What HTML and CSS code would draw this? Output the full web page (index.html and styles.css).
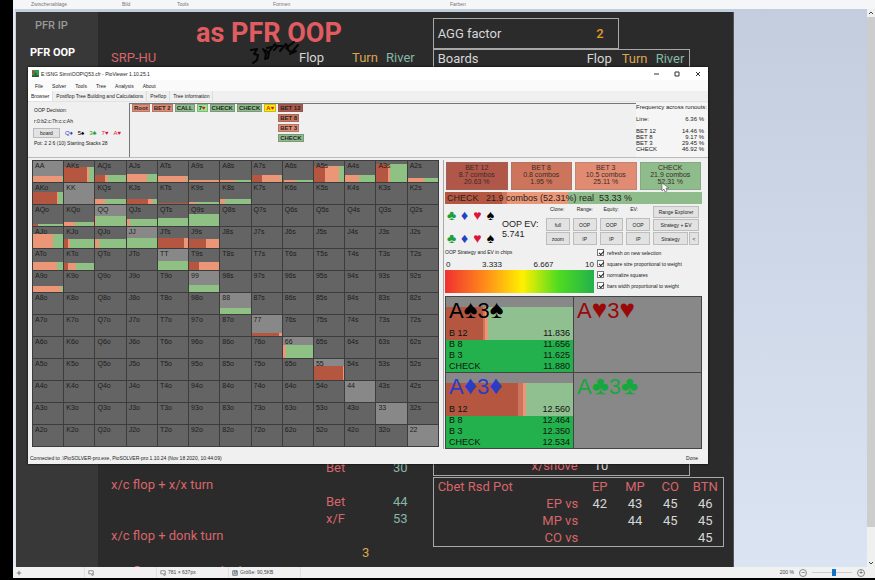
FILE: index.html
```html
<!DOCTYPE html>
<html lang="de">
<head>
    <meta charset="UTF-8">
    <meta name="viewport" content="width=device-width, initial-scale=1.0">
    <title>PioViewer</title>
    <link rel="stylesheet" href="styles.css">
</head>
<body>
    <div class="paint">
        <header class="ribbon">
            <span>Zwischenablage</span>
            <span>Bild</span>
            <span>Tools</span>
            <span>Formen</span>
            <span>Farben</span>
        </header>

        <main class="workspace">
            <div class="canvas">
                <nav class="side">
                    <a href="#ip">PFR IP</a>
                    <a href="#oop" class="current">PFR OOP</a>
                </nav>

                <section class="notes">
                    <h1>as PFR OOP</h1>
                    <div class="streets">
                        <span class="red">SRP-HU</span>
                        <span>Flop</span>
                        <span class="orange">Turn</span>
                        <span class="teal">River</span>
                    </div>
                    <div class="note-lines">
                        <div class="note"><span>Bet</span><b>30</b></div>
                        <p>x/c flop + x/x turn</p>
                        <div class="note"><span>Bet</span><b>44</b></div>
                        <div class="note"><span>x/F</span><b>53</b></div>
                        <p>x/c flop + donk turn</p>
                        <div class="note-mid">3</div>
                        <p class="last">x/c flop + x/x turn donk river</p>
                    </div>
                </section>

                <section class="stats">
                    <div class="agg"><span>AGG factor</span><b>2</b></div>
                    <div class="boards">
                        <div class="boards-head">
                            <span>Boards</span>
                            <span>Flop</span>
                            <span class="orange">Turn</span>
                            <span class="teal">River</span>
                        </div>
                        <div class="shove"><span>x/shove</span><b>10</b></div>
                    </div>
                    <table class="cbet">
                        <tr><th class="cbet-name">Cbet Rsd Pot</th><th>EP</th><th>MP</th><th>CO</th><th>BTN</th></tr>
                        <tr><th class="pos">EP vs</th><td>42</td><td>43</td><td>45</td><td>46</td></tr>
                        <tr><th class="pos">MP vs</th><td></td><td>44</td><td>45</td><td>45</td></tr>
                        <tr><th class="pos">CO vs</th><td></td><td></td><td></td><td>45</td></tr>
                    </table>
                </section>

                <svg class="scribble" viewBox="0 0 52 26" fill="none" stroke="#050505" stroke-width="2" stroke-linecap="round" stroke-linejoin="round">
                    <path d="M1 10l6-1-3 5 4 1-1 5-4 3"/>
                    <path d="M13 9l3 5-1 5 3-1 1-5-4-3M18 13l7-9M17 8l5-1M24 5l3 1"/>
                    <path d="M24 10l4-4 4 0M30 11l6-7 2 4M36 8l8-6M37 9l5 4 4-2M40 14l8-9"/>
                </svg>
            </div>
            <div class="desk"></div>
            <div class="scroll">
                <svg viewBox="0 0 8 8"><path d="M2 5l2-2 2 2" fill="none" stroke="#444"/></svg>
                <div class="scroll-thumb"></div>
                <svg viewBox="0 0 8 8"><path d="M2 3l2 2 2-2" fill="none" stroke="#444"/></svg>
            </div>
        </main>

        <footer class="paint-status">
            <span><svg viewBox="0 0 8 8"><path d="M4 1v6M1 4h6" stroke="#555"/></svg></span>
            <span><svg viewBox="0 0 8 8" fill="none" stroke="#777"><path d="M1 1v4h3M1 1h6v4M5 5h2v2H5z"/></svg></span>
            <span><svg viewBox="0 0 8 8" fill="none" stroke="#777"><path d="M1 1v4h3M1 1h6v4M5 5h2v2H5z"/></svg>781 × 637px</span>
            <span><svg viewBox="0 0 8 8" fill="none" stroke="#456"><path d="M1 1h6v6H1zM3 1v2h3V1M2 5h4"/></svg>Größe: 90,5KB</span>
            <div class="zoomer">
                <label for="zoom">200 %</label>
                <button aria-label="Verkleinern">−</button>
                <input type="range" id="zoom" min="0" max="100" value="56">
                <button aria-label="Vergrößern">+</button>
            </div>
        </footer>
    </div>

    <div class="window">
        <div class="titlebar">
            <svg class="app-icon" viewBox="0 0 8 8"><path fill="#2e9e4f" d="M0 0h8v8H0z"/><path fill="#bb4433" d="M0 1h3v3H0z"/><path fill="#315c3c" d="M3 3h2v4H3zM0 6h8v2H0z"/></svg>
            <span class="title">E:\SNG Sims\OOP\Q53.cfr - PioViewer 1.10.25.1</span>
            <button aria-label="Minimize"><svg viewBox="0 0 8 8"><path d="M2 4h5"/></svg></button>
            <button aria-label="Maximize"><svg viewBox="0 0 8 8"><path d="M2 2h4v4H2z"/></svg></button>
            <button aria-label="Close"><svg viewBox="0 0 8 8"><path d="M2 2l4 4M6 2L2 6"/></svg></button>
        </div>
        <div class="menubar">
            <button>File</button>
            <button>Solver</button>
            <button>Tools</button>
            <button>Tree</button>
            <button>Analysis</button>
            <button>About</button>
        </div>
        <div class="tabs">
            <button class="active">Browser</button>
            <button>Postflop Tree Building and Calculations</button>
            <button>Preflop</button>
            <button>Tree information</button>
        </div>

        <div class="upper">
            <div class="info">
                <div>OOP Decision:</div>
                <div>r:0:b2:c:7h:c:c:Ah</div>
                <div class="board">
                    <button>board</button>
                    <span class="d">Q♦</span><span class="s">5♠</span><span class="c">3♣</span><span class="h">7♥</span><span class="h">A♥</span>
                </div>
                <div>Pot: 2 2 6 (10) Starting Stacks 28</div>
            </div>
            <div class="tree">
                <button class="salmon">Root</button>
                <button class="salmon">BET 2</button>
                <button class="green">CALL</button>
                <button class="lime">7<i>♥</i></button>
                <button class="green">CHECK</button>
                <button class="green">CHECK</button>
                <button class="yellow">A<i>♥</i></button>
                <div class="branch">
                    <button class="brick">BET 12</button>
                    <button class="coral">BET 8</button>
                    <button class="salmon">BET 3</button>
                    <button class="green">CHECK</button>
                </div>
            </div>
            <div class="freq">
                <div>Frequency across runouts:</div>
                <dl>
                    <dt>Line:</dt><dd>6.36 %</dd>
                </dl>
                <dl>
                    <dt>BET 12</dt><dd>14.46 %</dd>
                    <dt>BET 8</dt><dd>9.17 %</dd>
                    <dt>BET 3</dt><dd>29.45 %</dd>
                    <dt>CHECK</dt><dd>46.92 %</dd>
                </dl>
            </div>
        </div>

        <div class="lower">
            <table class="matrix" id="matrix"></table>

            <div class="panel">
                <div class="actions">
                    <button class="brick">BET 12<br>8.7 combos<br>20.63 %</button>
                    <button class="coral">BET 8<br>0.8 combos<br>1.95 %</button>
                    <button class="salmon">BET 3<br>10.5 combos<br>25.11 %</button>
                    <button class="green">CHECK<br>21.9 combos<br>52.31 %</button>
                </div>
                <div class="summary">CHECK &nbsp; 21.9 combos (52.31%) real &nbsp;53.33 %</div>

                <div class="controls">
                    <div class="suits">
                        <button class="c">♣</button><button class="d">♦</button><button class="h">♥</button><button class="s">♠</button>
                        <button class="c">♣</button><button class="d">♦</button><button class="h">♥</button><button class="s">♠</button>
                    </div>
                    <div class="ev">OOP EV:<br>5.741</div>
                    <div class="picks">
                        <span>Clone:</span><span>Range:</span><span>Equity:</span><span>EV:</span>
                        <button>full</button><button>OOP</button><button>OOP</button><button>OOP</button>
                        <button>zoom</button><button>IP</button><button>IP</button><button>IP</button>
                    </div>
                    <div class="modes">
                        <button class="wide">Range Explorer</button>
                        <button class="wide">Strategy + EV</button>
                        <button>Strategy</button>
                        <button>&lt;</button>
                    </div>
                </div>

                <div class="options">
                    <div class="scale">
                        <div>OOP Strategy and EV in chips</div>
                        <div class="ticks"><span>0</span><span>3.333</span><span>6.667</span><span>10</span></div>
                        <div class="heat"></div>
                    </div>
                    <div class="checks">
                        <label><input type="checkbox" checked>refresh on new selection</label>
                        <label><input type="checkbox" checked>square size proportional to weight</label>
                        <label><input type="checkbox" checked>normalize squares</label>
                        <label><input type="checkbox" checked>bars width proportional to weight</label>
                    </div>
                </div>

                <div class="combos">
                    <div class="combo spades">
                        <h2>A<i>♠</i>3<i>♠</i></h2>
                        <dl>
                            <dt>B 12</dt><dd>11.836</dd>
                            <dt>B 8</dt><dd>11.656</dd>
                            <dt>B 3</dt><dd>11.625</dd>
                            <dt>CHECK</dt><dd>11.880</dd>
                        </dl>
                    </div>
                    <div class="combo hearts"><h2>A<i>♥</i>3<i>♥</i></h2></div>
                    <div class="combo diamonds">
                        <h2>A<i>♦</i>3<i>♦</i></h2>
                        <dl>
                            <dt>B 12</dt><dd>12.560</dd>
                            <dt>B 8</dt><dd>12.464</dd>
                            <dt>B 3</dt><dd>12.350</dd>
                            <dt>CHECK</dt><dd>12.534</dd>
                        </dl>
                    </div>
                    <div class="combo clubs"><h2>A<i>♣</i>3<i>♣</i></h2></div>
                </div>
            </div>
        </div>

        <div class="win-status">
            <span>Connected to .\PioSOLVER-pro.exe, PioSOLVER-pro 1.10.24 (Nov 18 2020, 10:44:09)</span>
            <span>Done</span>
        </div>
        <svg class="pointer" viewBox="0 0 8 10"><path d="M1 0v8l2-2 1 3 2-1-1-3h3z" fill="#fff" stroke="#555" stroke-width=".6"/></svg>
    </div>

    <script src="script.js"></script>
</body>
</html>
```
FILE: styles.css
```css
* {
    box-sizing: border-box;
}
body {
    margin: 0;
    background: #000;
    font-family: 'Liberation Sans', Arial, sans-serif;
    font-size: 5px;
    color: #222;
}
button {
    margin: 0;
    padding: 0;
    border: none;
    background: none;
    font: inherit;
    color: inherit;
}
h1, h2, p, dl, dd {
    margin: 0;
}
i {
    font-style: normal;
}

/* paint program */
.paint {
    display: flex;
    flex-direction: column;
    height: 100vh;
    padding: 0 0 2px 13px;
}
.ribbon {
    display: grid;
    grid-template-columns: 91px 55px 96px 177px 1fr;
    height: 9px;
    padding-left: 18px;
    background: #f5f6f8;
    color: #777;
    line-height: 9px;
}
.workspace {
    flex: 1;
    min-height: 0;
    display: grid;
    grid-template-columns: minmax(0, 721fr) minmax(0, 133fr) 8px;
    background: linear-gradient(#c3cddd, #dbe4f3);
    border-left: 2px solid #e6e9ee;
}
.canvas {
    position: relative;
    display: grid;
    grid-template-columns: 82px minmax(0, 335fr) minmax(0, 301fr);
    overflow: hidden;
    margin: 3px 0 0 1px;
    background: #2b2b2b;
    color: #d6d6d6;
    font-family: Roboto, sans-serif;
    font-size: 13px;
    line-height: 17px;
    border-right: 1px solid #555;
}
.side {
    display: flex;
    flex-direction: column;
    gap: 10px;
    padding: 5px 0 0 14px;
    background: #383838;
}
.side a {
    padding-left: 5px;
    color: #999;
    text-decoration: none;
    font-size: 11px;
    font-weight: 500;
}
.side .current {
    padding-left: 0;
    color: #fff;
    font-weight: 700;
}
.red,
.notes p,
.note span,
.shove span,
.cbet th {
    color: #d8656a;
}
.orange {
    color: #dca450;
}
.teal,
.note b {
    color: #84b8a6;
}
b {
    font-weight: 400;
}
.notes {
    padding-left: 13px;
}
.notes h1 {
    padding: 5px 0 0 85px;
    color: #e05c60;
    font-size: 27px;
    line-height: 32px;
    font-weight: 700;
}
.streets {
    display: grid;
    grid-template-columns: 188px 53px 34px 1fr;
}
.note-lines {
    padding-top: 393px;
}
.note {
    display: grid;
    grid-template-columns: 67px 1fr;
    padding-left: 215px;
}
.note-mid {
    padding-left: 251px;
    color: #dca450;
}
.notes .last {
    padding-top: 2px;
}
.agg {
    display: flex;
    width: 186px;
    height: 31px;
    margin-top: 6px;
    padding: 0 14px 0 4px;
    justify-content: space-between;
    align-items: center;
    border: 1px solid #a8a8a8;
}
.agg b {
    color: #e19a24;
    font-weight: 500;
}
.boards {
    display: flex;
    flex-direction: column;
    justify-content: space-between;
    width: 257px;
    height: 427px;
    border: 1px solid #a8a8a8;
}
.boards-head {
    display: grid;
    grid-template-columns: 149px 35px 34px 1fr;
    padding-left: 4px;
}
.shove {
    display: grid;
    grid-template-columns: 144px 1fr;
    gap: 16px;
    text-align: right;
    padding-bottom: 1px;
}
.shove b {
    text-align: left;
}
.cbet {
    width: 291px;
    margin-top: 1px;
    border: 1px solid #a8a8a8;
    border-collapse: collapse;
    table-layout: fixed;
}
.cbet th,
.cbet td {
    padding: 0;
    width: 35px;
    font-weight: 400;
    text-align: center;
}
.cbet th.cbet-name {
    width: 148px;
    padding-left: 4px;
    text-align: left;
}
.cbet th.pos {
    padding-right: 4px;
    text-align: right;
}
.scribble {
    position: absolute;
    top: 28px;
    left: 234px;
    width: 52px;
    height: 26px;
}
.scroll {
    display: flex;
    flex-direction: column;
    background: #f0f0f0;
}
.scroll svg {
    width: 8px;
    height: 8px;
}
.scroll-thumb {
    flex: 0 1 510px;
    margin-bottom: auto;
    background: #cdcdcd;
}
.paint-status {
    display: flex;
    height: 11px;
    background: #f1f1f1;
    color: #444;
    line-height: 11px;
}
.paint-status span {
    display: flex;
    align-items: center;
    gap: 2px;
    width: 72px;
    border-right: 1px solid #e0e0e0;
    padding-left: 3px;
}
.paint-status svg {
    width: 6px;
    height: 6px;
}
.zoomer {
    display: flex;
    align-items: center;
    gap: 5px;
    margin-left: auto;
    padding-right: 10px;
}
.zoomer button {
    width: 8px;
    height: 8px;
    border: 1px solid #888;
    border-radius: 50%;
    font-size: 7px;
    line-height: 5px;
}
.zoomer input {
    appearance: none;
    width: 40px;
    height: 8px;
    margin: 0;
    background: linear-gradient(#ccc, #ccc) center / 100% 1px no-repeat;
}
.zoomer input::-webkit-slider-thumb {
    appearance: none;
    width: 4px;
    height: 7px;
    background: #1473c4;
}

/* solver window */
.window {
    position: absolute;
    top: 67px;
    left: 28px;
    right: 167px;
    background: #f0f0f0;
    box-shadow: 0 0 2px #000;
}
.titlebar {
    display: flex;
    align-items: center;
    height: 13px;
    padding: 0 6px 0 4px;
    background: #fff;
}
.app-icon {
    width: 7px;
    height: 7px;
    margin-right: 2px;
}
.title {
    flex: 1;
}
.titlebar button {
    width: 21px;
    height: 13px;
    display: flex;
    align-items: center;
    justify-content: center;
}
.titlebar button:last-child {
    width: 9px;
    margin-left: 6px;
}
.titlebar button svg {
    width: 8px;
    height: 8px;
    fill: none;
    stroke: #333;
}
.menubar {
    display: flex;
    gap: 9px;
    height: 11px;
    padding-left: 7px;
    background: #fafafa;
}
.tabs {
    display: flex;
    height: 10px;
}
.tabs button {
    padding: 0 3px;
    border-right: 1px solid #ddd;
}
.tabs .active {
    background: #fff;
}
.upper {
    display: grid;
    grid-template-columns: 101px 1fr 72px;
    height: 57px;
    padding-top: 1px;
    border-top: 1px solid #e2e2e2;
    border-bottom: 1px solid #bbb;
}
.info {
    display: flex;
    flex-direction: column;
    gap: 5px;
    padding: 4px 0 0 6px;
    line-height: 6px;
}
.board {
    display: flex;
    align-items: center;
    gap: 5px;
    height: 10px;
    margin: -1px 0 -3px -1px;
    font-size: 6px;
}
.board button {
    flex: none;
    width: 27px;
    height: 10px;
    border: 1px solid #bbb;
    background: #e3e3e3;
    font-size: 5px;
}
.s {
    color: #000;
}
.h {
    color: #dc143c;
}
.d {
    color: #2541c4;
}
.c {
    color: #1f9e3c;
}
.tree {
    display: flex;
    align-items: flex-start;
    gap: 2px;
    padding: 0 2px;
    border: solid #777;
    border-width: 1px 0 0 1px;
}
.tree button {
    height: 8px;
    padding: 0 1px;
    border: 1px solid rgba(90, 90, 90, .35);
    font-size: 6px;
    line-height: 6px;
    font-weight: 700;
    color: #252525;
}
.tree i {
    color: #e01010;
}
.branch {
    display: flex;
    flex-direction: column;
    align-items: flex-start;
    gap: 2px;
}
.brick {
    background: #b0574a;
}
.coral {
    background: #cc755c;
}
.salmon {
    background: #e28b73;
}
.green {
    background: #8fbc8b;
}
.lime {
    background: #98e890;
}
.tree .brick {
    background: #b0574a;
}
.tree .yellow {
    background: #ffee00;
    color: #d02000;
}
.freq {
    padding: 1px 4px 0 0;
    background: #f5f5f5;
    font-size: 6px;
    line-height: 6px;
    white-space: nowrap;
}
.freq dl {
    display: grid;
    grid-template-columns: 1fr auto;
    padding-top: 6px;
    text-align: right;
}
.freq dt {
    text-align: left;
}
.lower {
    display: grid;
    grid-template-columns: minmax(0, 407fr) minmax(0, 263fr);
    gap: 4px;
    padding: 2px 2px 2px 4px;
}
.matrix {
    width: 100%;
    height: 287px;
    border-collapse: collapse;
    table-layout: fixed;
    background: #646464;
    font-size: 7px;
    line-height: 8px;
    color: #1c1c1c;
}
.matrix td {
    height: 22px;
    padding: 0;
    border: 1px solid #3c3c3c;
}
.matrix .pair {
    background: #888;
}
.cell {
    position: relative;
    display: flex;
    align-items: flex-end;
    height: 21px;
}
.cell span {
    position: absolute;
    top: 1px;
    left: 2px;
}
.bar {
    display: flex;
    width: 100%;
}
.bar div:nth-child(1) {
    background: #b55740;
}
.bar div:nth-child(2) {
    background: #ec9678;
}
.bar div:nth-child(3) {
    background: #90c184;
}

/* right panel */
.panel {
    display: flex;
    flex-direction: column;
    padding: 2px 4px 0 1px;
    border-left: 1px solid #aaa;
}
.actions {
    display: grid;
    grid-template-columns: repeat(4, 1fr);
    gap: 3px;
    padding: 0 1px;
}
.actions button {
    height: 28px;
    padding-bottom: 4px;
    border: 1px solid rgba(120, 120, 120, .3);
    color: #3b2b26;
    font-size: 7px;
    line-height: 7px;
}
.summary {
    height: 12px;
    margin-top: 2px;
    padding-left: 2px;
    background: linear-gradient(90deg, #b55740 22%, #cc755c 22%, #cc755c 24%, #ec9678 24%, #ec9678 48%, #8fbc8b 48%);
    font-size: 9px;
    line-height: 12px;
    white-space: nowrap;
}
.controls {
    display: grid;
    grid-template-columns: 54px 41px 1fr 46px;
    gap: 3px;
    height: 43px;
    padding: 2px 3px 0 0;
}
.suits {
    display: grid;
    grid-template-columns: repeat(4, 13px);
    align-content: space-between;
    font: 14px/18px 'Liberation Sans', sans-serif;
}
.ev {
    padding-top: 13px;
    font-size: 9px;
    line-height: 10px;
}
.picks {
    display: grid;
    grid-template-columns: repeat(4, 1fr);
    grid-template-rows: 11px 13px 13px;
    gap: 1px 3px;
}
.picks span {
    padding-left: 4px;
}
.picks button,
.modes button {
    border: 1px solid #bdbdbd;
    background: #e2e2e2;
}
.modes {
    display: grid;
    grid-template-columns: 1fr 10px;
    grid-template-rows: 12px 12px 13px;
    gap: 1px;
}
.modes .wide {
    grid-column: span 2;
}
.options {
    display: grid;
    grid-template-columns: minmax(0, 149fr) minmax(0, 105fr);
    gap: 3px;
    padding-top: 1px;
}
.scale {
    line-height: 7px;
    padding-top: 1px;
}
.ticks {
    display: flex;
    justify-content: space-between;
    padding: 4px 0 1px 1px;
    font-size: 8px;
    line-height: 9px;
}
.heat {
    height: 23px;
    background: linear-gradient(90deg, #f03030, #ff8c1a 27%, #fff000 52%, #50dc20 76%, #22b14c);
}
.checks {
    display: flex;
    flex-direction: column;
    gap: 4px;
    padding-top: 1px;
}
.checks label {
    display: flex;
    align-items: center;
    gap: 3px;
    height: 7px;
    white-space: nowrap;
}
.checks input {
    appearance: none;
    width: 7px;
    height: 7px;
    margin: 0;
    border: 1px solid #777;
    background: #fff;
}
.checks input:checked::before {
    content: '';
    display: block;
    width: 4px;
    height: 2px;
    margin: 1px 0 0 1px;
    border: solid #222;
    border-width: 0 0 1px 1px;
    transform: rotate(-45deg);
}
.combos {
    display: grid;
    grid-template-columns: 1fr 1fr;
    margin-top: 3px;
    border: solid #444;
    border-width: 1px 0 0 1px;
    background: #888;
}
.combo {
    display: flex;
    flex-direction: column;
    justify-content: space-between;
    height: 76px;
    padding: 1px 3px 0;
    border: solid #444;
    border-width: 0 1px 1px 0;
}
.combo h2 {
    font-size: 22px;
    line-height: 26px;
    font-weight: 400;
}
.combo i {
    font: 26px/20px 'Liberation Sans', sans-serif;
}
.combo dl {
    display: grid;
    grid-template-columns: 1fr auto;
    color: #111;
    font-size: 9px;
    line-height: 11px;
}
.spades,
.diamonds {
    background-repeat: no-repeat;
    background-size: 100% 33px, 100% 100%;
    background-position: 0 10px, 0 0;
}
.spades {
    color: #000;
    background-image: linear-gradient(90deg, #b55740 29%, #cc755c 29%, #cc755c 31%, #ec9678 31%, #ec9678 33%, #90c090 33%), linear-gradient(#888 10px, #22b14c 10px);
}
.diamonds {
    color: #2a3cc8;
    background-image: linear-gradient(90deg, #b55740 57%, #cc755c 57%, #cc755c 61%, #ec9678 61%, #ec9678 63%, #90c090 63%), linear-gradient(#888 10px, #22b14c 10px);
}
.hearts {
    color: #9a0808;
}
.clubs {
    color: #16a83c;
}
.win-status {
    display: flex;
    justify-content: space-between;
    height: 13px;
    padding: 0 10px 0 2px;
    line-height: 14px;
}
.pointer {
    position: absolute;
    top: 116px;
    left: 633px;
    width: 8px;
    height: 10px;
}
```
FILE: script.js
```js
const ranks = 'AKQJT98765432';

// hand: [bar height %, big bet %, small bet %, check %]
const bars = {
    AA: [28, 0, 97, 3],
    AKs: [72, 77, 5, 18],
    AQs: [33, 30, 10, 60],
    AJs: [40, 0, 66, 34],
    ATs: [30, 0, 97, 3],
    A9s: [8, 0, 100, 0],
    A8s: [8, 0, 50, 50],
    A7s: [35, 35, 63, 2],
    A6s: [10, 5, 40, 55],
    A5s: [78, 38, 45, 17],
    A4s: [33, 0, 45, 55],
    A3s: [85, 40, 4, 56],
    A2s: [20, 0, 55, 45],
    AKo: [55, 80, 3, 17],
    KQs: [25, 0, 32, 68],
    KJs: [25, 70, 18, 12],
    KTs: [6, 100, 0, 0],
    K9s: [8, 0, 20, 80],
    K8s: [22, 0, 15, 85],
    AQo: [8, 15, 0, 85],
    KQo: [20, 0, 37, 63],
    QQ: [50, 0, 3, 97],
    QJs: [33, 0, 12, 88],
    QTs: [38, 0, 2, 98],
    Q9s: [56, 0, 0, 100],
    AJo: [65, 0, 67, 33],
    KJo: [42, 12, 8, 80],
    QJo: [42, 0, 12, 88],
    JJ: [50, 0, 2, 98],
    JTs: [50, 85, 15, 0],
    J9s: [42, 57, 43, 0],
    ATo: [36, 0, 78, 22],
    KTo: [35, 12, 28, 60],
    TT: [42, 0, 0, 100],
    T9s: [36, 32, 68, 0],
    A9o: [30, 0, 93, 7],
    99: [35, 0, 0, 100],
    88: [28, 0, 0, 100],
    77: [15, 92, 8, 0],
    66: [60, 0, 12, 88],
    55: [66, 96, 4, 0]
};

const matrix = document.getElementById('matrix');

for (let r = 0; r < 13; r++) {
    const row = matrix.insertRow();
    for (let c = 0; c < 13; c++) {
        let hand = ranks[r] + ranks[c];
        if (c > r) hand += 's';
        if (c < r) hand = ranks[c] + ranks[r] + 'o';

        const td = row.insertCell();
        if (r === c) td.className = 'pair';

        let bar = '';
        if (bars[hand]) {
            const [height, ...parts] = bars[hand];
            bar = `<div class="bar" style="height:${height}%">` +
                parts.map(p => `<div style="width:${p}%"></div>`).join('') + '</div>';
        }
        td.innerHTML = `<div class="cell">${bar}<span>${hand}</span></div>`;
    }
}
```
